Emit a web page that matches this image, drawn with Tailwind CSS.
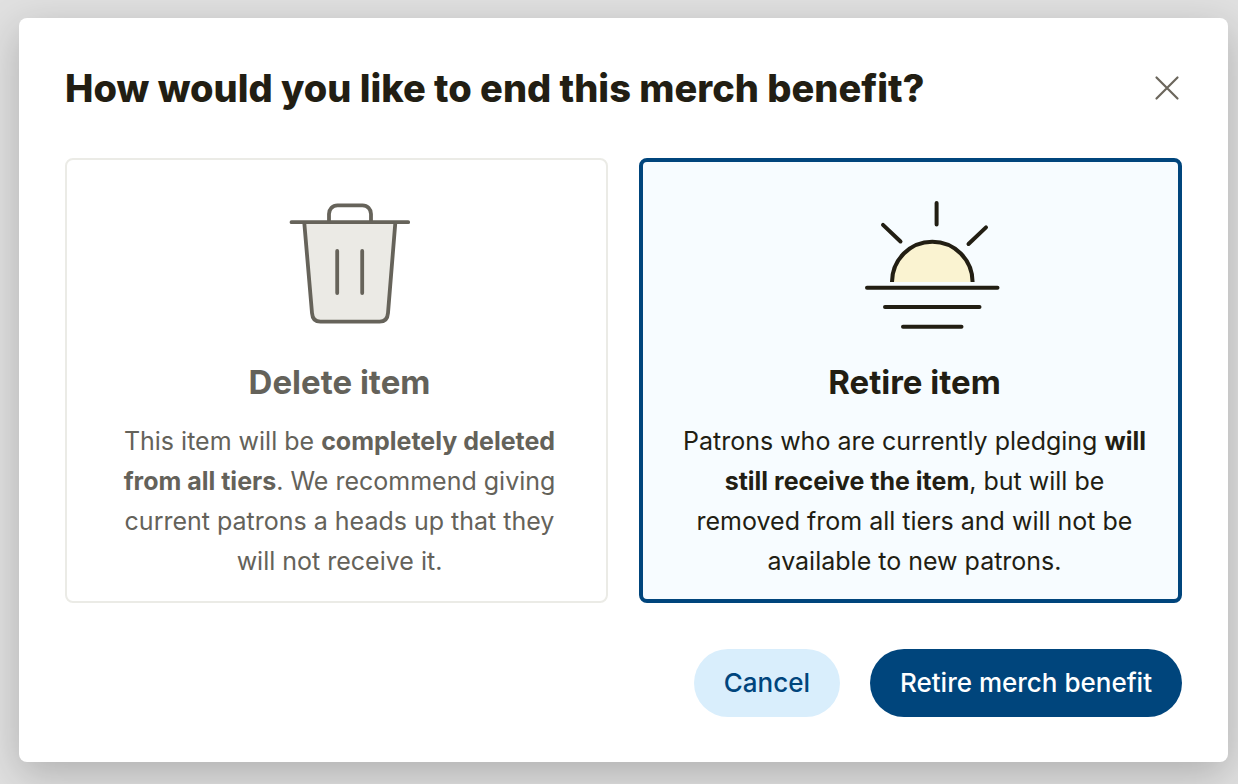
<!DOCTYPE html>
<html lang="en">
<head>
  <meta charset="UTF-8">
  <meta name="viewport" content="width=device-width, initial-scale=1.0">
  <title>End merch benefit</title>
  <script src="https://cdn.jsdelivr.net/npm/@tailwindcss/browser@4"></script>
</head>
<body class="bg-[#e0e0e0] min-h-screen pt-[18px] pr-[10px] pb-[22px] pl-[19px] font-[Inter,sans-serif] text-[#221e13]">
  <div role="dialog" aria-labelledby="title" class="bg-white rounded-lg shadow-[0_12px_40px_rgba(0,0,0,0.22)] px-[46px] pt-[46px] pb-[45px]">
    <div class="flex items-center justify-between mb-[46px]">
      <h1 id="title" class="text-[38px] leading-[48px] font-extrabold whitespace-nowrap">How would you like to end this merch benefit?</h1>
      <button type="button" aria-label="Close" class="p-0.5 text-[#6b665c] cursor-pointer">
        <svg class="w-[26px] h-[26px]" viewBox="0 0 26 26" fill="none" stroke="currentColor" stroke-width="2.2" stroke-linecap="round">
          <path d="M2.5 2.5l21 21M23.5 2.5l-21 21"/>
        </svg>
      </button>
    </div>

    <form>
      <div class="grid grid-cols-2 gap-[31px]">
        <label class="block border-2 border-[#ebebe6] rounded-lg pt-[30px] pb-5 pl-[50px] pr-[44px] text-center text-[#64625a] cursor-pointer">
          <input type="radio" name="action" value="delete" class="sr-only">
          <svg class="w-[180px] h-[150px] mx-auto" viewBox="0 0 180 150" fill="none" stroke="#66635a" stroke-width="3.8" stroke-linecap="round">
            <path fill="#ebeae5" d="M54.3 33L62 123C62.4 128.5 65.4 131.7 70.4 131.7H129.6C134.6 131.7 137.6 128.5 138 123L145.3 33"/>
            <path d="M79 31V24C79 19 82.5 15.4 87.5 15.4H112.5C117.5 15.4 121 19 121 24V31"/>
            <path d="M41.5 32.2H158.2M87.2 61V103M112.2 61V103"/>
          </svg>
          <span class="block text-[33px] leading-[44px] mt-5 font-bold">Delete item</span>
          <span class="block text-[25px] leading-10 mt-[17px]">This item will be <b>completely deleted from all tiers</b>. We recommend giving current patrons a heads up that they will not receive it.</span>
        </label>

        <label class="block border-4 border-[#00457c] bg-[#f7fcff] rounded-lg pt-[28px] pb-[18px] pl-[36px] pr-[28px] text-center cursor-pointer">
          <input type="radio" name="action" value="retire" class="sr-only" checked>
          <svg class="w-[180px] h-[150px] mx-auto" viewBox="0 0 180 150" fill="none" stroke="#221e13" stroke-width="4" stroke-linecap="round">
            <path fill="#faf3d1" stroke-linecap="butt" d="M67 92A40.3 40.3 0 0 1 147.6 92"/>
            <path d="M111.6 13V34.5M58 34.9L75.5 51.5M161 37.4L143.5 54"/>
            <path d="M42 97.7H172.5M60 117H154.5M78 136.7H136.5"/>
          </svg>
          <span class="block text-[33px] leading-[44px] mt-5 font-bold">Retire item</span>
          <span class="block text-[25px] leading-10 mt-[17px]">Patrons who are currently pledging <b>will still receive the item</b>, but will be removed from all tiers and will not be available to new patrons.</span>
        </label>
      </div>

      <div class="flex justify-end gap-[30px] mt-[46px] text-[26px] leading-10 font-medium">
        <button type="button" class="rounded-full bg-[#d9eefc] text-[#00457c] px-[30px] py-3.5 cursor-pointer">Cancel</button>
        <button type="submit" class="rounded-full bg-[#00457c] text-white px-[30px] py-3.5 cursor-pointer">Retire merch benefit</button>
      </div>
    </form>
  </div>
</body>
</html>
